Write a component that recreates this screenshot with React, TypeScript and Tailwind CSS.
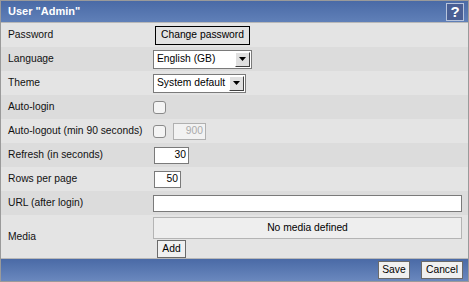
import type { ReactNode } from "react";

function Row({
  label,
  children,
  dark = false,
  tall = false,
}: {
  label: string;
  children?: ReactNode;
  dark?: boolean;
  tall?: boolean;
}) {
  return (
    <div
      className={`flex ${tall ? "h-[43px]" : "h-[24px] items-center"} ${
        dark ? "bg-[#dcdcdc]" : "bg-[#e4e4e4]"
      }`}
    >
      <div
        className={`w-[152px] shrink-0 pl-[7px] text-[10.3px] text-[#111] ${
          tall ? "self-center" : ""
        }`}
      >
        {label}
      </div>
      <div className="flex flex-1 items-center gap-[7px] pr-[6px]">{children}</div>
    </div>
  );
}

function Select({ value, width }: { value: string; width: string }) {
  return (
    <div
      className={`flex h-[19px] ${width} items-center border border-[#7a7a7a] bg-white pl-[3px] text-[10.3px] text-black`}
    >
      <span className="flex-1">{value}</span>
      <span className="mr-[1px] flex h-[15px] w-[15px] items-center justify-center border border-t-[#fff] border-l-[#fff] border-r-[#404040] border-b-[#404040] bg-[#e0e0e0]">
        <svg width="7" height="4" viewBox="0 0 7 4">
          <path d="M0 0h7L3.5 4z" fill="#000" />
        </svg>
      </span>
    </div>
  );
}

function Checkbox() {
  return (
    <div className="h-[13px] w-[13px] rounded-[3px] border border-[#8a8a8a] bg-[#f4f4f4]" />
  );
}

function NumberBox({ value, width, muted = false }: { value: string; width: string; muted?: boolean }) {
  return (
    <div
      className={`flex h-[17px] ${width} items-center justify-end border ${
        muted ? "border-[#b0b0b0] bg-[#f2f2f2] text-[#aaa]" : "border-[#7a7a7a] bg-white text-black"
      } pr-[2px] text-[10.3px]`}
    >
      {value}
    </div>
  );
}

export default function App() {
  return (
    <div className="h-[282px] w-[469px] border border-[#9a9a9a] bg-[#e4e4e4] font-['Liberation_Sans',Arial,sans-serif]">
      <div className="flex h-[22px] items-center justify-between border-b border-[#b8b8b8] bg-gradient-to-b from-[#4a6aa6] to-[#6080b8] pl-[7px] pr-[4px]">
        <span className="text-[11px] font-bold text-white">User "Admin"</span>
        <span className="flex h-[18px] w-[18px] items-center justify-center border border-[#b8c4dc] bg-[#4a5f94] text-[15px] font-bold leading-none text-white">
          ?
        </span>
      </div>

      <Row label="Password">
        <button className="ml-[2px] h-[19px] w-[95px] border border-black bg-[#e2e2e2] text-[10.3px] text-black">
          Change password
        </button>
      </Row>
      <Row label="Language" dark>
        <Select value="English (GB)" width="w-[99px]" />
      </Row>
      <Row label="Theme">
        <Select value="System default" width="w-[93px]" />
      </Row>
      <Row label="Auto-login" dark>
        <Checkbox />
      </Row>
      <Row label="Auto-logout (min 90 seconds)">
        <Checkbox />
        <NumberBox value="900" width="w-[33px]" muted />
      </Row>
      <Row label="Refresh (in seconds)" dark>
        <div className="ml-[1px]">
          <NumberBox value="30" width="w-[35px]" />
        </div>
      </Row>
      <Row label="Rows per page">
        <div className="ml-[1px]">
          <NumberBox value="50" width="w-[27px]" />
        </div>
      </Row>
      <Row label="URL (after login)" dark>
        <div className="h-[17px] flex-1 border border-[#7a7a7a] bg-white" />
      </Row>
      <Row label="Media" tall>
        <div className="flex flex-1 flex-col items-start pt-[2px]">
          <div className="flex h-[22px] w-full items-center justify-center border border-[#b4b4b4] bg-[#eeeeee] text-[10.3px] text-black">
            No media defined
          </div>
          <button className="ml-[4px] mt-[1px] h-[18px] w-[29px] border border-[#6a6a6a] bg-[#f0f0f0] text-[10.3px] text-black">
            Add
          </button>
        </div>
      </Row>

      <div className="flex h-[23px] items-center justify-end gap-[11px] border-t border-[#b8b8b8] bg-gradient-to-b from-[#4a6aa6] to-[#6a88be] pr-[5px]">
        <button className="h-[18px] w-[32px] border border-[#6a6a6a] bg-[#f0f0f0] text-[10.3px] text-black">
          Save
        </button>
        <button className="h-[18px] w-[42px] border border-[#6a6a6a] bg-[#f0f0f0] text-[10.3px] text-black">
          Cancel
        </button>
      </div>
    </div>
  );
}
